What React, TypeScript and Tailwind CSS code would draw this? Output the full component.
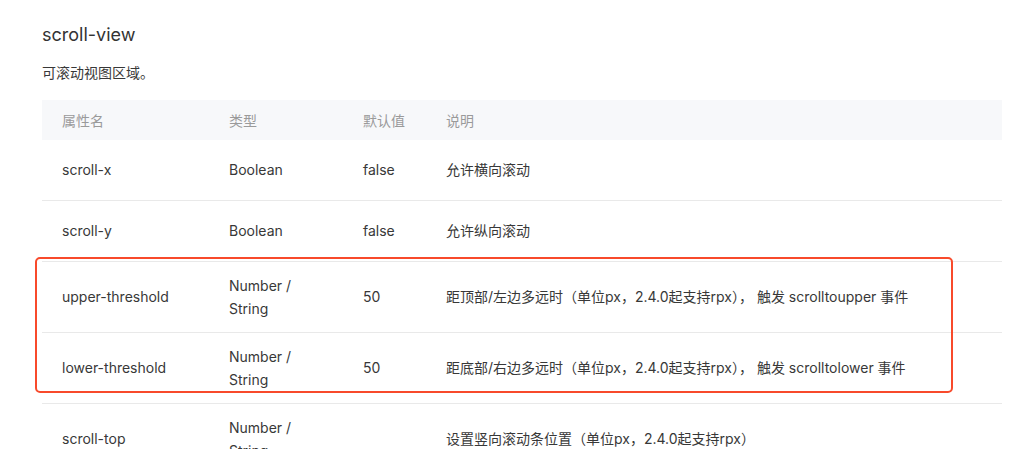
import * as React from "react";

type Fila = {
  nombre: string;
  tipo: string[];
  defecto: string;
  descripcion: string;
};

const FILAS: Fila[] = [
  { nombre: "scroll-x", tipo: ["Boolean"], defecto: "false", descripcion: "允许横向滚动" },
  { nombre: "scroll-y", tipo: ["Boolean"], defecto: "false", descripcion: "允许纵向滚动" },
  {
    nombre: "upper-threshold",
    tipo: ["Number /", "String"],
    defecto: "50",
    descripcion: "距顶部/左边多远时（单位px，2.4.0起支持rpx）， 触发 scrolltoupper 事件",
  },
  {
    nombre: "lower-threshold",
    tipo: ["Number /", "String"],
    defecto: "50",
    descripcion: "距底部/右边多远时（单位px，2.4.0起支持rpx）， 触发 scrolltolower 事件",
  },
  {
    nombre: "scroll-top",
    tipo: ["Number /", "String"],
    defecto: "",
    descripcion: "设置竖向滚动条位置（单位px，2.4.0起支持rpx）",
  },
];

const COLS = "grid grid-cols-[167px_134px_83px_1fr]";

export default function App() {
  return (
    <div className="h-[449px] overflow-hidden bg-white pl-[42px] pt-[22px] font-['Inter','Noto_Sans_CJK_SC',sans-serif] text-[#383838]">
      <h2 className="text-[18px] leading-[26px] text-[#333]">scroll-view</h2>
      <p className="mt-[14px] text-[14px] leading-[22px]">可滚动视图区域。</p>

      {/* Tabla */}
      <div className="relative mt-[16px] w-[960px] text-[14px]">
        <div className={`${COLS} h-[40px] items-center bg-[#f7f8fa] text-[#9a9a9a]`}>
          <span className="pl-5">属性名</span>
          <span className="pl-5">类型</span>
          <span className="pl-5">默认值</span>
          <span className="pl-5">说明</span>
        </div>
        {FILAS.map((fila) => (
          <FilaPropiedad key={fila.nombre} fila={fila} />
        ))}

        {/* Marco resaltado */}
        <div className="pointer-events-none absolute left-[-7px] top-[157px] h-[136px] w-[918px] rounded-[5px] border-[2.5px] border-[#f84a2b]" />
      </div>
    </div>
  );
}

function FilaPropiedad({ fila }: { fila: Fila }) {
  const dosLineas = fila.tipo.length > 1;
  return (
    <div
      className={`${COLS} items-center border-b border-[#e9e9e9] pb-px leading-[23px] ${
        dosLineas ? "h-[71px]" : "h-[61px]"
      }`}
    >
      <span className="pl-5">{fila.nombre}</span>
      <span className="flex flex-col pl-5">
        {fila.tipo.map((t) => (
          <span key={t}>{t}</span>
        ))}
      </span>
      <span className="pl-5">{fila.defecto}</span>
      <span className="pl-5">{fila.descripcion}</span>
    </div>
  );
}
